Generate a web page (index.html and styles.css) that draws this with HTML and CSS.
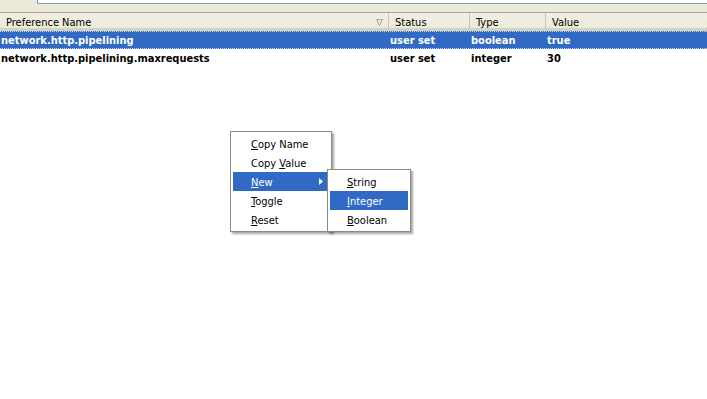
FILE: index.html
```html
<!DOCTYPE html>
<html lang="en">
<head>
    <meta charset="UTF-8">
    <title>about:config</title>
    <link rel="stylesheet" href="styles.css">
</head>
<body>
    <div class="filter-bar">
        <div class="filter-box"></div>
    </div>

    <div class="tree">
        <div class="tree-head">
            <div class="col col-name">Preference Name
                <svg class="sort-icon" width="7" height="7" viewBox="0 0 7 7"><path d="M0.5 0.5 H6.5 L3.5 6.5 Z" fill="none" stroke="#aca899"/></svg>
            </div>
            <div class="col">Status</div>
            <div class="col">Type</div>
            <div class="col">Value</div>
        </div>
        <div class="tree-row selected">
            <div class="cell cell-name">network.http.pipelining</div>
            <div class="cell">user set</div>
            <div class="cell">boolean</div>
            <div class="cell">true</div>
        </div>
        <div class="tree-row">
            <div class="cell cell-name">network.http.pipelining.maxrequests</div>
            <div class="cell">user set</div>
            <div class="cell">integer</div>
            <div class="cell">30</div>
        </div>
    </div>

    <!-- context menu -->
    <div class="menu main-menu">
        <div class="menu-item"><u>C</u>opy Name</div>
        <div class="menu-item">Copy <u>V</u>alue</div>
        <div class="menu-item active"><u>N</u>ew
            <svg class="arrow" width="4" height="7" viewBox="0 0 4 7"><path d="M0 0 L4 3.5 L0 7 Z" fill="#fff"/></svg>
        </div>
        <div class="menu-item"><u>T</u>oggle</div>
        <div class="menu-item"><u>R</u>eset</div>
    </div>
    <div class="menu sub-menu">
        <div class="menu-item"><u>S</u>tring</div>
        <div class="menu-item active"><u>I</u>nteger</div>
        <div class="menu-item"><u>B</u>oolean</div>
    </div>
</body>
</html>
```

FILE: styles.css
```css
body {
    margin: 0;
    background-color: #fff;
    font-family: "DejaVu Sans Condensed", "Liberation Sans", sans-serif;
    font-size: 11px;
    color: #000;
}
.filter-bar {
    height: 12px;
    background-color: #ece9d8;
    padding-left: 37px;
}
.filter-box {
    height: 3px;
    background-color: #fff;
    border-left: 1px solid #7f9db9;
    border-bottom: 1px solid #7f9db9;
}
.tree {
    border-top: 1px solid #a5a597;
}
.tree-head {
    display: grid;
    grid-template-columns: 388px 81px 76px 1fr;
    height: 18px;
    background: linear-gradient(#f1efe2, #ebeadb);
    border-bottom: 3px solid #d6d2c2;
    box-sizing: border-box;
}
.col {
    position: relative;
    padding-left: 6px;
    height: 15px;
    line-height: 20px;
    border-left: 1px solid #c7c5b2;
    white-space: nowrap;
}
.col:first-child {
    border-left: none;
}
.sort-icon {
    position: absolute;
    right: 5px;
    top: 6px;
}
.tree-row {
    display: grid;
    grid-template-columns: 388px 81px 76px 1fr;
    height: 18px;
    line-height: 19px;
    font-weight: bold;
    box-sizing: border-box;
}
.tree-row.selected {
    background-color: #316ac5;
    color: #fff;
    border-top: 1px dotted #c4d4ee;
    border-bottom: 1px dotted #c4d4ee;
    line-height: 18px;
}
.cell {
    padding-left: 2px;
    white-space: nowrap;
    overflow: hidden;
}
.cell-name {
    padding-left: 1px;
}
.menu {
    position: absolute;
    background-color: #fff;
    border: 1px solid #8d8b80;
    padding: 2px;
    box-shadow: 2px 2px 2px rgba(0, 0, 0, 0.35);
}
.main-menu {
    left: 230px;
    top: 131px;
    width: 96px;
}
.sub-menu {
    left: 327px;
    top: 169px;
    width: 78px;
}
.menu-item {
    position: relative;
    height: 19px;
    line-height: 21px;
    padding-left: 18px;
}
.sub-menu .menu-item {
    padding-left: 17px;
}
.menu-item.active {
    background-color: #316ac5;
    color: #fff;
}
.arrow {
    position: absolute;
    right: 6px;
    top: 6px;
}
```
